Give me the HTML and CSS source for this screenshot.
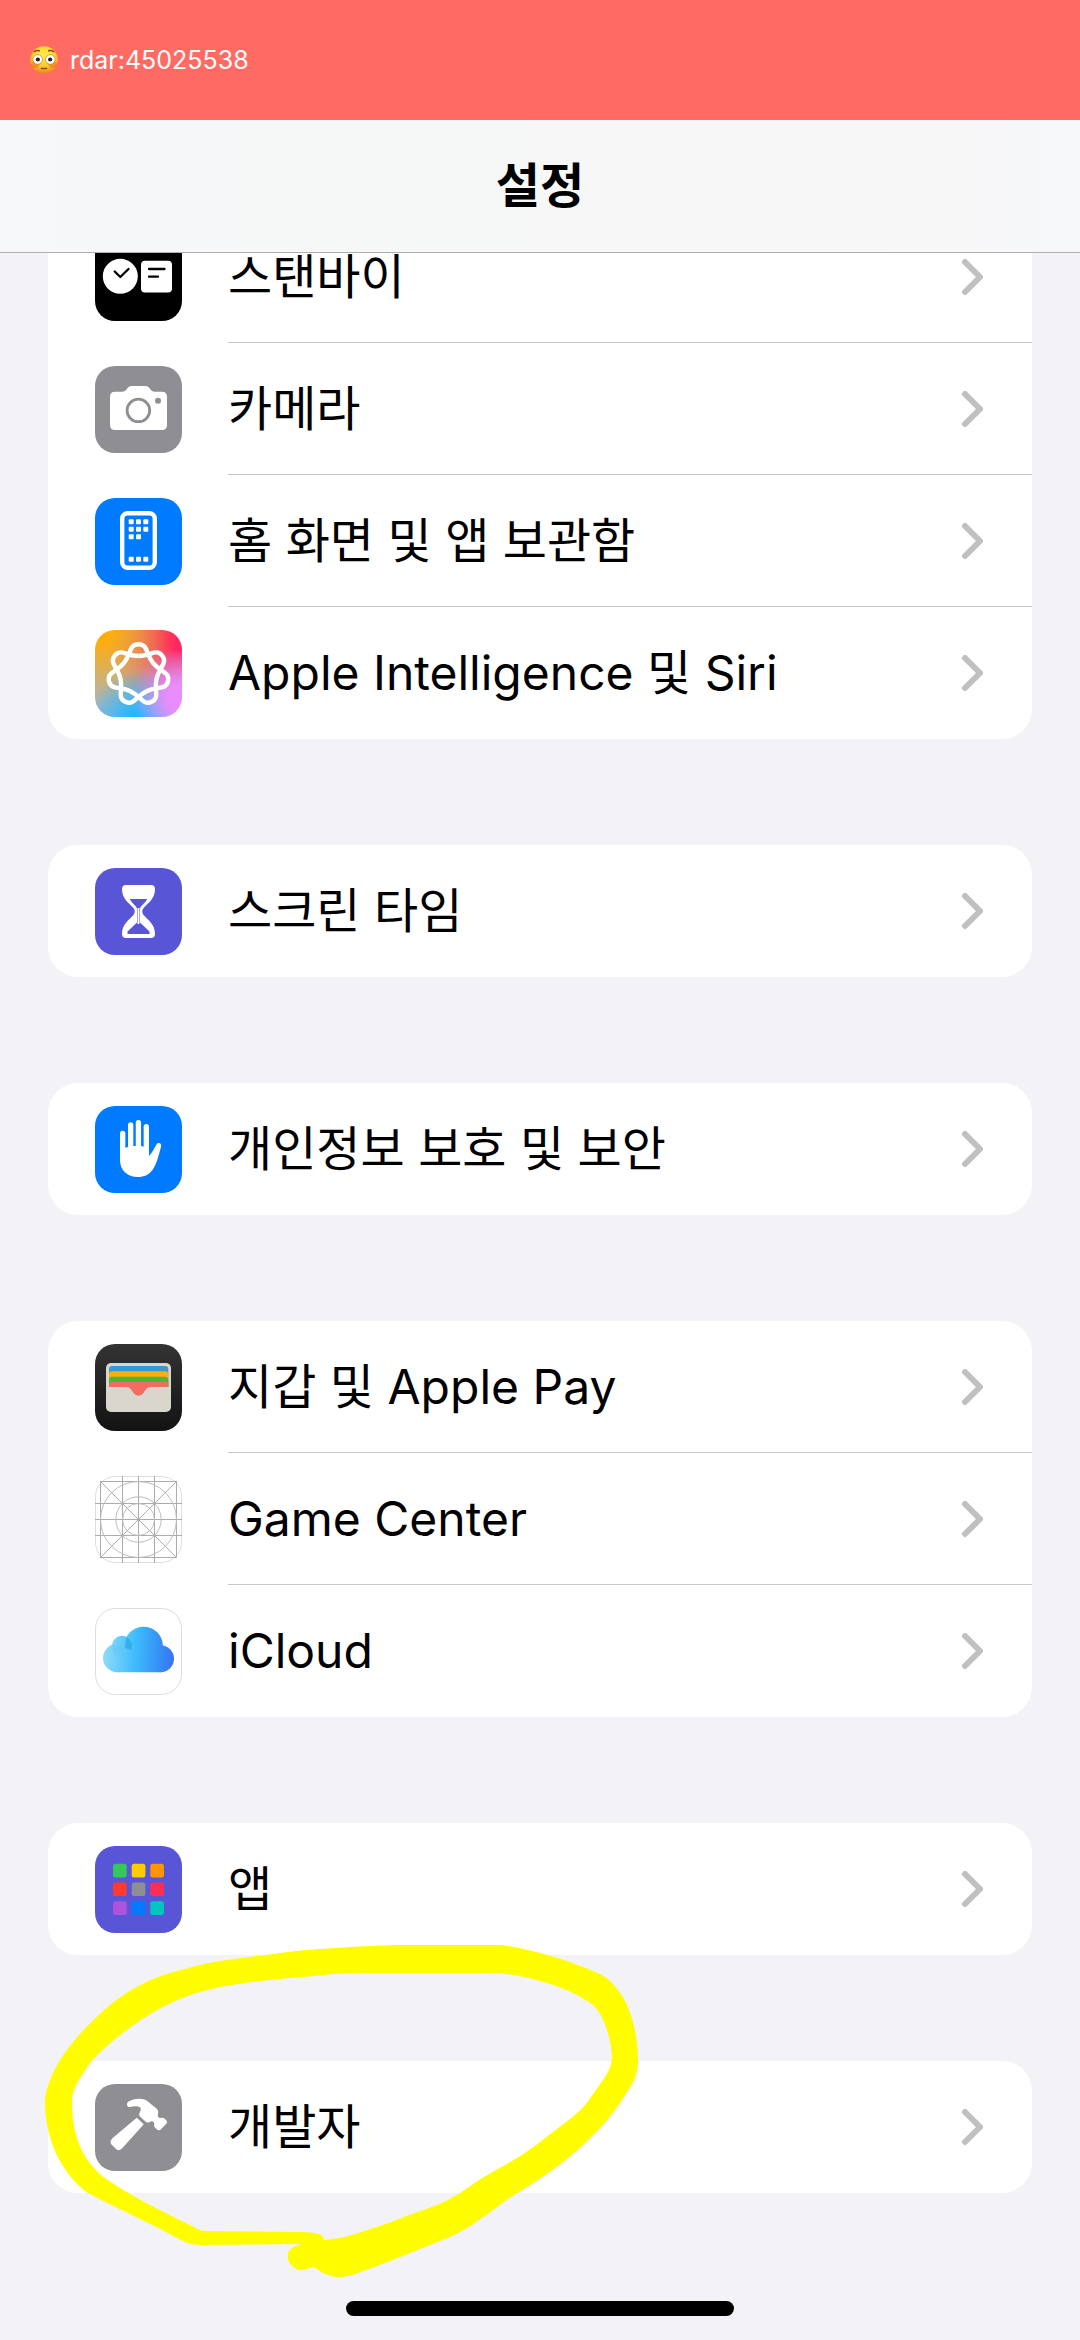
FILE: index.html
```html
<!DOCTYPE html>
<html lang="ko">
<head>
    <meta charset="UTF-8">
    <meta name="viewport" content="width=device-width, initial-scale=1.0">
    <title>설정</title>
    <link rel="stylesheet" href="styles.css">
</head>
<body>
    <!-- Shared chevron -->
    <svg class="defs" aria-hidden="true">
        <symbol id="chevron" viewBox="0 0 22 36">
            <path d="M4 3 19 18 4 33" fill="none" stroke="#c0c0c0" stroke-width="6" stroke-linecap="round" stroke-linejoin="round"/>
        </symbol>
    </svg>

    <header>
        <div class="status">
            <svg class="face" viewBox="0 0 27 27" aria-hidden="true">
                <defs>
                    <radialGradient id="faceFill" cx="0.5" cy="0.3" r="0.75">
                        <stop offset="0" stop-color="#fff04a"/>
                        <stop offset="0.6" stop-color="#fbc82c"/>
                        <stop offset="1" stop-color="#e8731b"/>
                    </radialGradient>
                </defs>
                <circle cx="13.5" cy="13.5" r="13.3" fill="url(#faceFill)"/>
                <ellipse cx="5" cy="18" rx="4" ry="3" fill="#f4762a" opacity="0.6"/>
                <ellipse cx="22" cy="18" rx="4" ry="3" fill="#f4762a" opacity="0.6"/>
                <circle cx="7.4" cy="13" r="4.6" fill="#fff" stroke="#a9793a" stroke-width="0.6"/>
                <circle cx="19.6" cy="13" r="4.6" fill="#fff" stroke="#a9793a" stroke-width="0.6"/>
                <circle cx="7.6" cy="13" r="2" fill="#2b1b12"/>
                <circle cx="19.4" cy="13" r="2" fill="#2b1b12"/>
                <path d="M4 5.5Q6 3.8 9 4.6M23 5.5Q21 3.8 18 4.6M11 21.7H16" fill="none" stroke="#8a4a12" stroke-width="1.4" stroke-linecap="round"/>
            </svg>
            <span>rdar:45025538</span>
        </div>
        <h1>설정</h1>
    </header>

    <main>
        <ul class="group">
            <li><a class="row" href="#">
                <svg class="icon" viewBox="0 0 87 87" aria-hidden="true">
                    <rect width="87" height="87" rx="20" fill="#000"/>
                    <circle cx="25.3" cy="42.3" r="17.5" fill="#fff"/>
                    <rect x="46" y="26.7" width="31" height="31.7" rx="4" fill="#fff"/>
                    <path d="M19.7 37.5 25.3 43 33.5 35M54 35H69.5M54 42.7H63" fill="none" stroke="#000" stroke-width="2.3" stroke-linecap="round" stroke-linejoin="round"/>
                </svg>
                <span class="label">스탠바이<svg class="chevron" aria-hidden="true"><use href="#chevron"/></svg></span>
            </a></li>
            <li><a class="row" href="#">
                <svg class="icon" viewBox="0 0 87 87" aria-hidden="true">
                    <rect width="87" height="87" rx="20" fill="#8e8e93"/>
                    <path d="M20 25.7H27Q30 25.7 31.5 23.5L32.5 22Q34 20 37 20H50Q53 20 54.5 22L55.5 23.5Q57 25.7 60 25.7H67Q72 25.7 72 31V59Q72 64 67 64H20Q15 64 15 59V31Q15 25.7 20 25.7Z" fill="#fff"/>
                    <circle cx="43.4" cy="44.4" r="11.3" fill="none" stroke="#8e8e93" stroke-width="2.8"/>
                    <circle cx="63" cy="34.7" r="3" fill="#8e8e93"/>
                </svg>
                <span class="label">카메라<svg class="chevron" aria-hidden="true"><use href="#chevron"/></svg></span>
            </a></li>
            <li><a class="row" href="#">
                <svg class="icon" viewBox="0 0 87 87" aria-hidden="true">
                    <rect width="87" height="87" rx="20" fill="#007aff"/>
                    <rect x="27.2" y="15.2" width="32.6" height="54.6" rx="5.5" fill="none" stroke="#fff" stroke-width="4.4"/>
                    <g fill="#fff">
                        <rect x="33.7" y="21.2" width="5" height="5" rx="1"/>
                        <rect x="41" y="21.2" width="5" height="5" rx="1"/>
                        <rect x="48.3" y="21.2" width="5" height="5" rx="1"/>
                        <rect x="33.7" y="28.8" width="5" height="5" rx="1"/>
                        <rect x="41" y="28.8" width="5" height="5" rx="1"/>
                        <rect x="48.3" y="28.8" width="5" height="5" rx="1"/>
                        <rect x="33.7" y="36.3" width="5" height="5" rx="1"/>
                        <rect x="41" y="36.3" width="5" height="5" rx="1"/>
                        <rect x="33.7" y="58.8" width="5" height="5" rx="1"/>
                        <rect x="41" y="58.8" width="5" height="5" rx="1"/>
                        <rect x="48.3" y="58.8" width="5" height="5" rx="1"/>
                    </g>
                </svg>
                <span class="label">홈 화면 및 앱 보관함<svg class="chevron" aria-hidden="true"><use href="#chevron"/></svg></span>
            </a></li>
            <li><a class="row" href="#">
                <svg class="icon siri" viewBox="0 0 87 87" aria-hidden="true">
                    <g transform="translate(43.5 44.5)" fill="none" stroke="#fff" stroke-width="4.4">
                        <path id="lobe" d="M-14.5 -11.5C-7 -20.9 -9.5 -30.3 0 -30.3S7 -20.9 14.5 -11.5"/>
                        <use href="#lobe" transform="rotate(51.43)"/>
                        <use href="#lobe" transform="rotate(102.86)"/>
                        <use href="#lobe" transform="rotate(154.29)"/>
                        <use href="#lobe" transform="rotate(205.71)"/>
                        <use href="#lobe" transform="rotate(257.14)"/>
                        <use href="#lobe" transform="rotate(308.57)"/>
                    </g>
                </svg>
                <span class="label">Apple Intelligence 및 Siri<svg class="chevron" aria-hidden="true"><use href="#chevron"/></svg></span>
            </a></li>
        </ul>

        <ul class="group">
            <li><a class="row" href="#">
                <svg class="icon" viewBox="0 0 87 87" aria-hidden="true">
                    <rect width="87" height="87" rx="20" fill="#5856d6"/>
                    <path d="M31 17H56Q60 17 60 21C60 31 53 35 48.5 40Q46 43.5 48.5 47C53 52 60 56 60 66Q60 70 56 70H31Q27 70 27 66C27 56 34 52 38.5 47Q41 43.5 38.5 40C34 35 27 31 27 21Q27 17 31 17Z" fill="#fff"/>
                    <path d="M34.7 31H52.3C50 35.5 45.5 37.5 45 41V54.5L54.5 63.5V66H32.5V63.5L42 54.5V41C41.5 37.5 37 35.5 34.7 31Z" fill="#5856d6"/>
                    <path d="M43.5 40V56" stroke="#fff" stroke-width="2"/>
                </svg>
                <span class="label">스크린 타임<svg class="chevron" aria-hidden="true"><use href="#chevron"/></svg></span>
            </a></li>
        </ul>

        <ul class="group">
            <li><a class="row" href="#">
                <svg class="icon" viewBox="0 0 87 87" aria-hidden="true">
                    <rect width="87" height="87" rx="20" fill="#007aff"/>
                    <path d="M27.7 27.4V50M35.7 19V50M43.4 16.7V50M51.3 20.7V50" stroke="#fff" stroke-width="5.3" stroke-linecap="round"/>
                    <path d="M25 43Q30 42 33 41L38 40H46L54 42V50C57 47 59 42.5 61.5 38.5C63.5 35.5 67 37.5 66 41C63 51 62 57.5 57.5 64C53.5 69 49 71 43 71C32 71 25 64 25 54Z" fill="#fff"/>
                </svg>
                <span class="label">개인정보 보호 및 보안<svg class="chevron" aria-hidden="true"><use href="#chevron"/></svg></span>
            </a></li>
        </ul>

        <ul class="group">
            <li><a class="row" href="#">
                <svg class="icon" viewBox="0 0 87 87" aria-hidden="true">
                    <defs>
                        <linearGradient id="walletBg" x2="0" y2="1">
                            <stop offset="0" stop-color="#333"/>
                            <stop offset="1" stop-color="#131313"/>
                        </linearGradient>
                    </defs>
                    <rect width="87" height="87" rx="20" fill="url(#walletBg)"/>
                    <rect x="11" y="19" width="65" height="49" rx="5" fill="#d9d6ce"/>
                    <path d="M14 43V25Q14 22 17 22H70Q73.3 22 73.3 25V43Z" fill="#3a97d3"/>
                    <path d="M14 43V30Q14 27.3 17 27.3H70Q73.3 27.3 73.3 30V43Z" fill="#ffad07"/>
                    <path d="M14 43V36Q14 32.7 17 32.7H70Q73.3 32.7 73.3 36V43Z" fill="#4ab73a"/>
                    <path d="M14 43V41Q14 38 17 38H70Q73.3 38 73.3 41V43H56C49 43 50 51.7 43.5 51.7S38 43 31 43Z" fill="#f26d5f"/>
                </svg>
                <span class="label">지갑 및 Apple Pay<svg class="chevron" aria-hidden="true"><use href="#chevron"/></svg></span>
            </a></li>
            <li><a class="row" href="#">
                <svg class="icon" viewBox="0 0 87 87" aria-hidden="true">
                    <rect x="0.5" y="0.5" width="86" height="86" rx="20" fill="#fff" stroke="#ddd"/>
                    <g fill="none" stroke="#acacac">
                        <rect x="5.5" y="5.5" width="76" height="76"/>
                        <path d="M27.5 0V87M43.5 0V87M59.5 0V87M0 27.5H87M0 43.5H87M0 59.5H87"/>
                        <path d="M5.5 5.5 81.5 81.5M81.5 5.5 5.5 81.5"/>
                        <g stroke="#bdbdbd">
                            <circle cx="43.5" cy="43.5" r="16"/>
                            <circle cx="43.5" cy="43.5" r="22.7"/>
                            <circle cx="43.5" cy="43.5" r="38"/>
                        </g>
                    </g>
                </svg>
                <span class="label">Game Center<svg class="chevron" aria-hidden="true"><use href="#chevron"/></svg></span>
            </a></li>
            <li><a class="row" href="#">
                <svg class="icon" viewBox="0 0 87 87" aria-hidden="true">
                    <defs>
                        <linearGradient id="cloudFill" gradientUnits="userSpaceOnUse" x1="8" y1="48" x2="79" y2="52">
                            <stop offset="0" stop-color="#8fdcf5"/>
                            <stop offset="0.45" stop-color="#3fbcfd"/>
                            <stop offset="0.75" stop-color="#3596f5"/>
                            <stop offset="1" stop-color="#3a70f4"/>
                        </linearGradient>
                    </defs>
                    <rect x="0.5" y="0.5" width="86" height="86" rx="20" fill="#fff" stroke="#ddd"/>
                    <g fill="url(#cloudFill)">
                        <circle cx="27" cy="37.7" r="10"/>
                        <circle cx="22.3" cy="50" r="14.3"/>
                        <circle cx="48.6" cy="38" r="19.3"/>
                        <circle cx="65.5" cy="50.8" r="13.5"/>
                        <path d="M22 64.3V40H66V64.3Z"/>
                    </g>
                    <path d="M32 29A10 10 0 0 1 36 42L30 40Q30 33 32 29Z" fill="#22a4e4" opacity="0.6"/>
                    <path d="M17.5 40A10 10 0 0 0 20 46Q26 49 33 46Q30 36 17.5 36.5Z" fill="#5cc8f2" opacity="0.4"/>
                </svg>
                <span class="label">iCloud<svg class="chevron" aria-hidden="true"><use href="#chevron"/></svg></span>
            </a></li>
        </ul>

        <ul class="group">
            <li><a class="row" href="#">
                <svg class="icon" viewBox="0 0 87 87" aria-hidden="true">
                    <rect width="87" height="87" rx="20" fill="#5856d6"/>
                    <rect x="18" y="17.7" width="13.7" height="13.7" rx="2.5" fill="#34c759"/>
                    <rect x="36.7" y="17.7" width="13.7" height="13.7" rx="2.5" fill="#ffcc00"/>
                    <rect x="55.3" y="17.7" width="13.7" height="13.7" rx="2.5" fill="#ff9500"/>
                    <rect x="18" y="36.4" width="13.7" height="13.7" rx="2.5" fill="#ff3b30"/>
                    <rect x="36.7" y="36.4" width="13.7" height="13.7" rx="2.5" fill="#8e8e93"/>
                    <rect x="55.3" y="36.4" width="13.7" height="13.7" rx="2.5" fill="#ff2d55"/>
                    <rect x="18" y="55.2" width="13.7" height="13.7" rx="2.5" fill="#af52de"/>
                    <rect x="36.7" y="55.2" width="13.7" height="13.7" rx="2.5" fill="#007aff"/>
                    <rect x="55.3" y="55.2" width="13.7" height="13.7" rx="2.5" fill="#00c7be"/>
                </svg>
                <span class="label">앱<svg class="chevron" aria-hidden="true"><use href="#chevron"/></svg></span>
            </a></li>
        </ul>

        <ul class="group marked">
            <li><a class="row" href="#">
                <svg class="icon" viewBox="0 0 87 87" aria-hidden="true">
                    <rect width="87" height="87" rx="20" fill="#8e8e93"/>
                    <path d="M41.7 33.7 48.8 40.3 27 64.5Q23.6 68 20.5 64.5L16.5 60.5Q14 57.5 17.7 54Z" fill="#fff"/>
                    <path d="M32 21Q31.5 18.5 34.5 17C41 14 48 14 52.5 17.2L61.5 24.5Q64 27 63 30Q62 33 65 34Q68 33 70 35L71.5 36.5Q72.5 38 71.5 39.5L65.5 45.8Q63.6 47 62 45.5L59.5 43Q58.5 41.5 59.3 39.5Q58.5 37 56.4 37.3Q53 39.5 51 38L45 32.5Q43.5 31 44.5 29Q46.5 26 45.5 23.5C42 21.5 38 22 35 23Q32.5 23.5 32 21Z" fill="#fff"/>
                </svg>
                <span class="label">개발자<svg class="chevron" aria-hidden="true"><use href="#chevron"/></svg></span>
            </a></li>
            <!-- Marker circle around the last entry -->
            <li class="marker" aria-hidden="true">
                <svg viewBox="0 0 600 340">
                    <path fill="#fffd00" fill-rule="evenodd" d="M1 163C1 153 4 145 9 133C19 112 36 92 57 73C82 50 107 37 141 29C170 20 200 18 230 14C262 9 300 7 352 5H457C490 9 530 22 558 35C585 52 594 90 594 120C594 138 588 144 580 157C565 180 553 192 537 207C500 240 475 250 453 267C436 280 423 289 406 297C375 309 345 322 314 333C297 340 284 338 270 327L258 330C249 331 240 319 245 311C248 307 252 306 257 304L158 305C150 305 146 304 141 302C110 285 72 268 44 253C15 232 1 195 1 163ZM28 163C27 150 36 138 46 123C63 103 105 70 141 57C178 43 225 40 280 35C300 33 320 33 335 33H448C480 34 525 47 549 65C562 77 568 105 568 117C567 132 560 138 545 160C540 167 532 175 522 182C505 195 490 207 478 215C462 225 447 232 432 242C418 252 405 261 390 266C360 277 330 289 301 297Q291 299 280 300C280 293 269 292 251 292L160 291Q156 291 150 287C115 270 85 255 61 238C35 218 28 190 28 163Z"/>
                </svg>
            </li>
        </ul>
    </main>

    <div class="home-indicator"></div>
</body>
</html>
```
FILE: styles.css
```css
/* General Reset */
* {
    margin: 0;
    padding: 0;
    box-sizing: border-box;
}

body {
    font-family: Inter, 'Noto Sans CJK KR', sans-serif;
    background: #f2f2f7;
    color: #000;
    display: flex;
    flex-direction: column;
    min-height: 100vh;
}

.defs {
    display: none;
}

header {
    position: sticky;
    top: 0;
    z-index: 1;
    background: linear-gradient(to right, #f7f8fa, #f6f7f7 30%, #f7f7f7 80%, #f7f8fa);
    border-bottom: 1px solid #b0b0b4;
}

.status {
    display: flex;
    align-items: center;
    gap: 12px;
    height: 120px;
    padding: 0 30px;
    background: #ff6b62;
    color: white;
    font-size: 25px;
}

.face {
    width: 28px;
    height: 28px;
}

header h1 {
    font-size: 48px;
    font-weight: 600;
    line-height: 132px;
    text-align: center;
}

/* The list is scrolled a little way under the header */
main {
    display: flex;
    flex-direction: column;
    gap: 106px;
    margin-top: -42px;
    padding: 0 48px;
}

.group {
    list-style: none;
    background: white;
    border-radius: 30px;
}

.row {
    display: flex;
    align-items: center;
    gap: 46px;
    padding-left: 47px;
    color: inherit;
    text-decoration: none;
}

.icon {
    flex: none;
    width: 87px;
    height: 87px;
}

.siri {
    border-radius: 20px;
    background:
        radial-gradient(circle at 100% 78%, #e98cff 12%, transparent 45%),
        radial-gradient(circle at 50% 105%, #1fb8ff 8%, transparent 50%),
        radial-gradient(circle at 5% 0%, #ffac0c 10%, transparent 65%),
        radial-gradient(circle at 100% 8%, #ff2661 12%, transparent 65%),
        #a9b4c4;
}

.label {
    flex: 1;
    display: flex;
    align-items: center;
    justify-content: space-between;
    min-height: 132px;
    padding-right: 49px;
    border-bottom: 1px solid #c6c6c8;
    font-size: 48px;
    line-height: 60px;
}

.group li:last-child .label,
.marked .label {
    border-bottom-color: transparent;
}

.chevron {
    flex: none;
    width: 22px;
    height: 36px;
}

.marked {
    position: relative;
}

.marker {
    position: absolute;
    left: -4px;
    top: -121px;
    width: 600px;
    pointer-events: none;
}

.marker svg {
    display: block;
    width: 100%;
}

.home-indicator {
    width: 36%;
    height: 15px;
    margin: auto auto 24px;
    border-radius: 8px;
    background: black;
}
```
